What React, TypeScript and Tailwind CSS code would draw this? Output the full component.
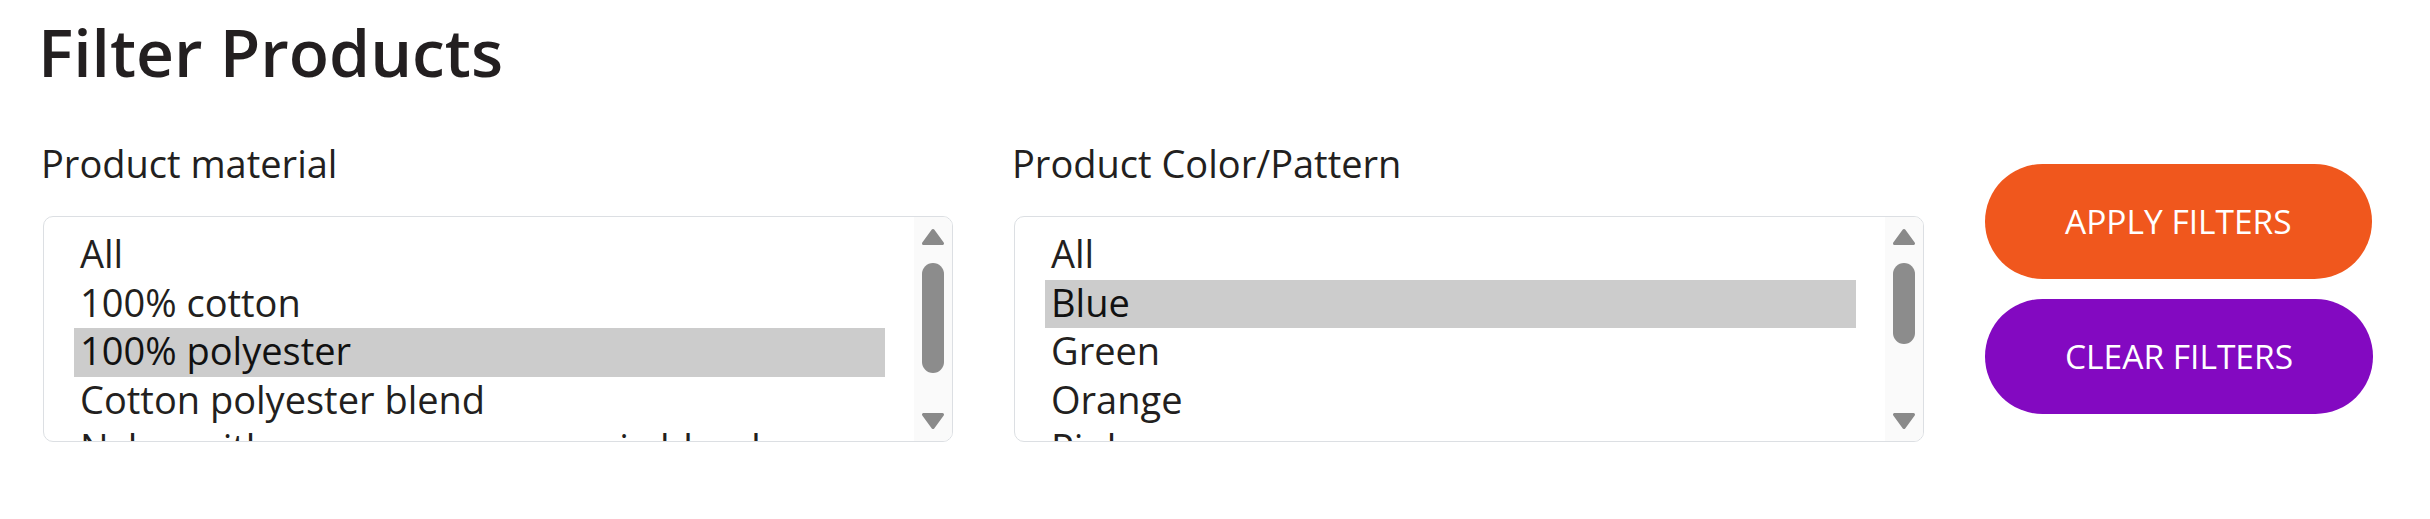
const MATERIALS = [
  'All',
  '100% cotton',
  '100% polyester',
  'Cotton polyester blend',
  'Nylon with an uncommon ramie blend',
  'Wool',
]

const COLORS = ['All', 'Blue', 'Green', 'Orange', 'Pink', 'Purple', 'Red']

function Arrow({ down }: { down?: boolean }) {
  return (
    <svg width="24" height="18" viewBox="0 0 24 18" className={down ? 'rotate-180' : ''}>
      <path d="M12 2.5 L21.5 15.5 L2.5 15.5 Z" fill="#8a8a8a" stroke="#8a8a8a" strokeWidth="3" strokeLinejoin="round" />
    </svg>
  )
}

function ListBox({ options, selected, thumb }: { options: string[]; selected: string; thumb: string }) {
  return (
    <div className="flex h-[226px] w-[910px] overflow-hidden rounded-[10px] border border-[#dcdfe3] bg-white">
      <div className="flex-1 pl-[30px] pr-[29px] pt-[14px]">
        {options.map((o) => (
          <div
            key={o}
            className={`h-[48.5px] whitespace-nowrap pl-[6px] leading-[45px] ${o === selected ? 'bg-[#cccccc] text-[#111111]' : ''}`}
          >
            {o}
          </div>
        ))}
      </div>
      <div className="flex w-[38px] flex-col items-center bg-[#fafafa] py-[11px]">
        <Arrow />
        <div className={`mt-[17px] w-[22px] rounded-full bg-[#8c8c8c] ${thumb}`} />
        <div className="flex-1" />
        <Arrow down />
      </div>
    </div>
  )
}

export default function App() {
  return (
    <div className="min-h-screen bg-white pl-[43px] pt-[17px] font-['Open_Sans',sans-serif] text-[#231f20]">
      <h1 className="-ml-[5px] mb-[59px] text-[66px] font-semibold leading-[68px]">Filter Products</h1>

      <div className="flex items-start gap-[61px]">
        <div>
          <div className="-ml-[2px] mb-[34px] text-[38px] leading-[38px]">Product material</div>
          <div className="text-[38px]">
            <ListBox options={MATERIALS} selected="100% polyester" thumb="h-[110px]" />
          </div>
        </div>

        <div>
          <div className="-ml-[2px] mb-[34px] text-[38px] leading-[38px]">Product Color/Pattern</div>
          <div className="text-[38px]">
            <ListBox options={COLORS} selected="Blue" thumb="h-[81px]" />
          </div>
        </div>

        <div className="mt-[20px] flex flex-col items-start gap-[20px]">
          <button className="flex h-[115px] items-center rounded-full bg-[#f0571d] px-[80px] text-[33.5px] font-medium text-white">
            APPLY FILTERS
          </button>
          <button className="flex h-[115px] items-center rounded-full bg-[#8309c1] px-[80px] text-[33.5px] font-medium text-white">
            CLEAR FILTERS
          </button>
        </div>
      </div>
    </div>
  )
}
